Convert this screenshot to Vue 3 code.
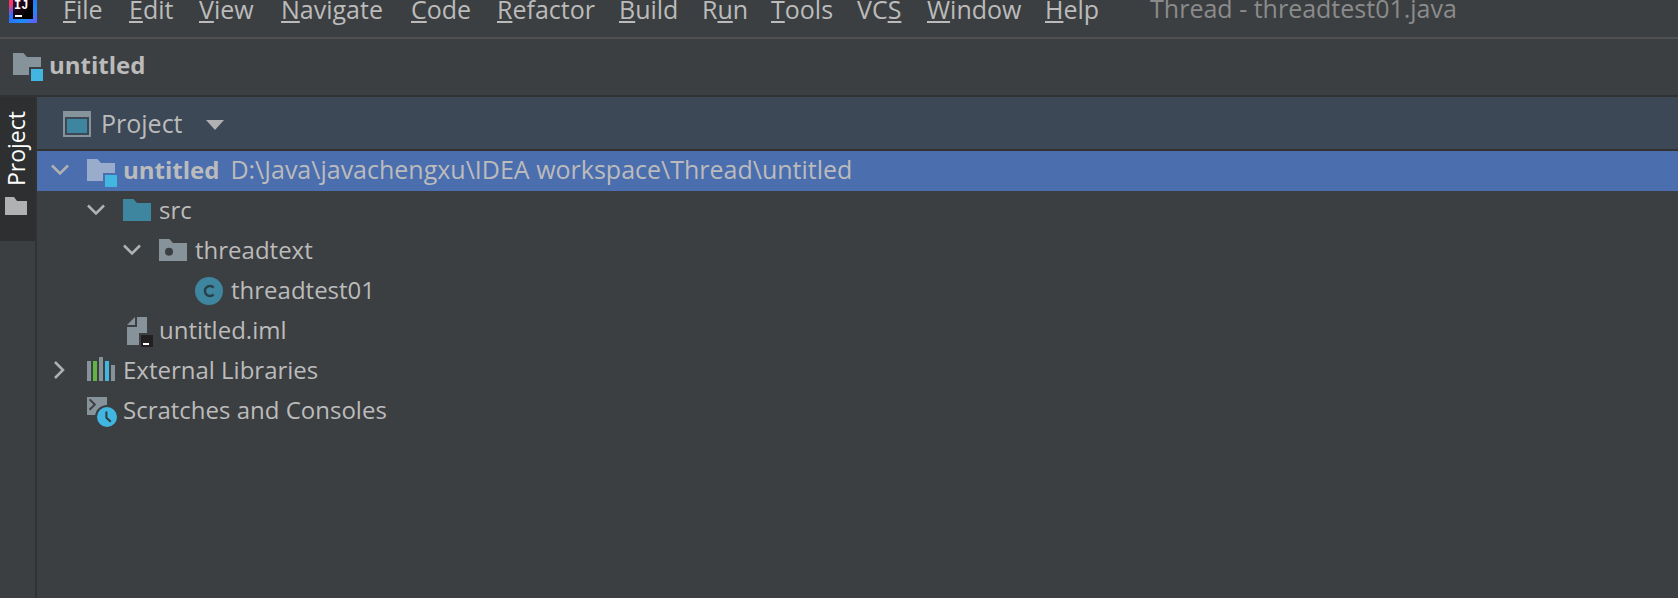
<script setup>
import { ref, computed } from 'vue'

const menus = [
  ['', 'F', 'ile'],
  ['', 'E', 'dit'],
  ['', 'V', 'iew'],
  ['', 'N', 'avigate'],
  ['', 'C', 'ode'],
  ['', 'R', 'efactor'],
  ['', 'B', 'uild'],
  ['R', 'u', 'n'],
  ['', 'T', 'ools'],
  ['VC', 'S', ''],
  ['', 'W', 'indow'],
  ['', 'H', 'elp'],
]

const nodes = ref([
  { id: 'root', parent: null, depth: 0, icon: 'module', label: 'untitled', path: 'D:\\Java\\javachengxu\\IDEA workspace\\Thread\\untitled', branch: true, open: true },
  { id: 'src', parent: 'root', depth: 1, icon: 'source', label: 'src', branch: true, open: true },
  { id: 'pkg', parent: 'src', depth: 2, icon: 'package', label: 'threadtext', branch: true, open: true },
  { id: 'cls', parent: 'pkg', depth: 3, icon: 'class', label: 'threadtest01' },
  { id: 'iml', parent: 'root', depth: 1, icon: 'iml', label: 'untitled.iml' },
  { id: 'libs', parent: null, depth: 0, icon: 'library', label: 'External Libraries', branch: true, open: false },
  { id: 'scratch', parent: null, depth: 0, icon: 'scratch', label: 'Scratches and Consoles' },
])
const selected = ref('root')

function isShown(node) {
  let parent = nodes.value.find((n) => n.id === node.parent)
  while (parent) {
    if (!parent.open) return false
    const up = parent.parent
    parent = nodes.value.find((n) => n.id === up)
  }
  return true
}
const visible = computed(() => nodes.value.filter(isShown))
</script>

<template>
  <div class="ide">
    <header class="menubar">
      <svg class="logo" viewBox="0 5 28 23" aria-hidden="true">
        <defs>
          <linearGradient id="logo-edge" x1="0" y1="0" x2="1" y2="1">
            <stop offset="0" stop-color="#fe315d" />
            <stop offset="0.2" stop-color="#f5356e" />
            <stop offset="0.4" stop-color="#2f6bff" />
            <stop offset="0.7" stop-color="#1a8cf5" />
            <stop offset="1" stop-color="#6b57ff" />
          </linearGradient>
          <linearGradient id="logo-core" x1="0" y1="0" x2="1" y2="1">
            <stop offset="0" stop-color="#3d0a2c" />
            <stop offset="0.7" stop-color="#000" />
          </linearGradient>
        </defs>
        <rect width="28" height="28" fill="url(#logo-edge)" />
        <rect x="4" y="4" width="20" height="20" fill="url(#logo-core)" />
        <text x="5" y="14" class="logo-text">IJ</text>
        <rect x="6" y="20" width="7" height="2" fill="#fff" />
      </svg>
      <nav class="menus">
        <button v-for="m in menus" :key="m.join('')" class="menu" type="button">{{ m[0] }}<span class="mnemonic">{{ m[1] }}</span>{{ m[2] }}</button>
      </nav>
      <span class="title">Thread - threadtest01.java</span>
    </header>

    <div class="navbar">
      <svg class="icon" viewBox="0 0 16 16" aria-hidden="true">
        <path fill="#87939a" d="M1 2h5.2l1.8 2h7v5H9v4H1z" />
        <path fill="#40b6e0" d="M10 10h6v6h-6z" />
      </svg>
      <strong class="crumb">untitled</strong>
    </div>

    <div class="body">
      <aside class="stripe">
        <button class="stripe-button" type="button">
          <span class="stripe-label">Project</span>
          <svg class="stripe-icon" viewBox="0 0 22 18" aria-hidden="true">
            <path fill="#afb1b3" d="M0 0h9l3 4h10v14H0z" />
          </svg>
        </button>
      </aside>

      <main class="panel">
        <div class="panel-head">
          <svg class="icon" viewBox="0 0 16 16" aria-hidden="true">
            <path fill="#87939a" fill-rule="evenodd" d="M1 2h14v13H1zM2 5v9h12V5z" />
            <path fill="#3e86a0" d="M3 6h10v7H3z" />
          </svg>
          <select class="view-select" aria-label="Project view">
            <option>Project</option>
          </select>
          <svg class="arrow" viewBox="0 0 18 10" aria-hidden="true"><path fill="#afb1b3" d="M0 0h18l-9 10z" /></svg>
        </div>

        <ul class="tree" role="tree">
          <li
            v-for="n in visible"
            :key="n.id"
            class="row"
            :class="['depth-' + n.depth, { selected: n.id === selected }]"
            role="treeitem"
            :aria-selected="n.id === selected"
            @click="selected = n.id"
          >
            <button v-if="n.branch" class="toggle" type="button" :aria-label="'Toggle ' + n.label" @click.stop="n.open = !n.open">
              <svg class="chevron" viewBox="0 0 22 20" aria-hidden="true">
                <path v-if="n.open" d="M3 4.500l8 8 8-8" />
                <path v-else d="M6 1l8 8-8 8" />
              </svg>
            </button>
            <span v-else class="toggle"></span>

            <svg class="icon" viewBox="0 0 16 16" aria-hidden="true">
              <template v-if="n.icon === 'module'">
                <path fill="#9aaccb" d="M1 2h5.200l1.800 2h7v5H9v4H1z" />
                <path fill="#40b6e0" d="M10 10h6v6h-6z" />
              </template>
              <path v-else-if="n.icon === 'source'" fill="#3e86a0" d="M1 2h5.200l1.800 2h7v9H1z" />
              <template v-else-if="n.icon === 'package'">
                <path fill="#87939a" d="M1 2h5.200l1.800 2h7v9H1z" />
                <circle cx="6" cy="8.400" r="2" fill="#3c3f41" />
              </template>
              <template v-else-if="n.icon === 'class'">
                <circle cx="8" cy="8" r="7" fill="#3e86a0" />
                <path fill="none" stroke="#2b3f48" stroke-width="1.200" d="M10.300 6.300A2.500 2.500 0 1 0 10.300 9.700" />
              </template>
              <template v-else-if="n.icon === 'iml'">
                <path fill="#87939a" d="M3 5l4-4v4zM8 1h5v8H9v6H3V6h5z" />
                <path fill="#231f20" d="M10 10h6v6h-6z" />
                <path fill="#fff" d="M11 14h3v1h-3z" />
              </template>
              <template v-else-if="n.icon === 'library'">
                <path fill="#87939a" d="M1 3h2v10H1zM7 1h2v12H7zM13 5h2v8h-2z" />
                <path fill="#62b543" d="M4 3h2v10H4z" />
                <path fill="#40b6e0" d="M10 3h2v10h-2z" />
              </template>
              <template v-else>
                <path fill="#87939a" d="M1 1h10v9H1z" />
                <path fill="none" stroke="#3c3f41" stroke-width="1" d="M2.300 2.200l2.600 2.600-2.600 2.600" />
                <circle cx="11" cy="11" r="6" fill="#3c3f41" />
                <circle cx="11" cy="11" r="5" fill="#40b6e0" />
                <path fill="none" stroke="#2f3b40" stroke-width="1" d="M10.700 8.200v3.200l2.200 2" />
              </template>
            </svg>
            <span class="texts">
              <strong v-if="n.path">{{ n.label }}</strong>
              <span v-else>{{ n.label }}</span>
              <span v-if="n.path" class="path">{{ n.path }}</span>
            </span>
          </li>
        </ul>
      </main>
    </div>
  </div>
</template>

<style>
body {
  background: #3c3f41;
}
</style>

<style scoped>
.ide {
  display: flex;
  flex-direction: column;
  min-height: 100vh;
  background: #3c3f41;
  color: #bbb;
  font-family: "Open Sans", "Noto Sans", sans-serif;
  font-size: 25px;
  line-height: 36px;
  white-space: nowrap;
}

.ide * {
  box-sizing: border-box;
}

button,
select {
  margin: 0;
  padding: 0;
  border: 0;
  background: none;
  color: inherit;
  font: inherit;
}

.icon {
  flex: none;
  width: 32px;
  height: 32px;
}

.menubar {
  display: flex;
  align-items: flex-start;
  height: 39px;
  padding-left: 9px;
  border-bottom: 2px solid #515151;
  line-height: 18px;
}

.logo {
  flex: none;
  width: 28px;
  height: 23px;
}

.logo-text {
  fill: #fff;
  font: bold 12px "Liberation Mono", monospace;
}

.menus {
  display: grid;
  grid-template-columns: 66px 70px 82px 130px 86px 122px 83px 69px 86px 70px 118px auto;
  justify-items: start;
  margin-left: 26px;
}

.mnemonic {
  text-decoration: underline;
  text-decoration-thickness: 2px;
  text-underline-offset: 2px;
}

.title {
  margin-left: 51px;
  color: #8b8b8b;
  line-height: 16px;
}

.navbar {
  display: flex;
  align-items: center;
  gap: 6px;
  height: 58px;
  padding: 0 11px 4px;
  border-bottom: 2px solid #323232;
}

.crumb,
.texts {
  font-size: 24px;
}

.body {
  display: flex;
  flex: 1;
}

.stripe {
  flex: none;
  width: 37px;
  border-right: 2px solid #323232;
}

.stripe-button {
  display: flex;
  flex-direction: column;
  align-items: center;
  gap: 11px;
  width: 35px;
  height: 144px;
  padding: 14px 3px 0 0;
  background: #2d2f30;
  color: #fff;
}

.stripe-label {
  writing-mode: vertical-rl;
  transform: rotate(180deg);
  font-size: 23px;
  line-height: 32px;
}

.stripe-icon {
  width: 22px;
  height: 18px;
}

.panel {
  flex: 1;
  min-width: 0;
}

.panel-head {
  display: flex;
  align-items: center;
  height: 54px;
  padding-left: 24px;
  border-bottom: 2px solid #323232;
  background: #3d4856;
}

.view-select {
  margin-left: 8px;
  padding-right: 41px;
  appearance: none;
}

.arrow {
  width: 18px;
  height: 10px;
  margin: 4px 0 0 -18px;
  pointer-events: none;
}

.tree {
  margin: 0;
  padding: 0;
  list-style: none;
}

.row {
  display: flex;
  align-items: center;
  height: 40px;
  padding-left: 12px;
}

.depth-1 {
  padding-left: 48px;
}

.depth-2 {
  padding-left: 84px;
}

.depth-3 {
  padding-left: 120px;
}

.selected {
  background: #4b6eaf;
}

.toggle {
  display: flex;
  flex: none;
  width: 36px;
}

.chevron {
  width: 22px;
  height: 20px;
  fill: none;
  stroke: #afb1b3;
  stroke-width: 2.500;
}

.texts {
  display: flex;
  align-items: baseline;
  gap: 11px;
  margin-left: 6px;
  padding-bottom: 3px;
}

.path {
  font-size: 25px;
}
</style>
